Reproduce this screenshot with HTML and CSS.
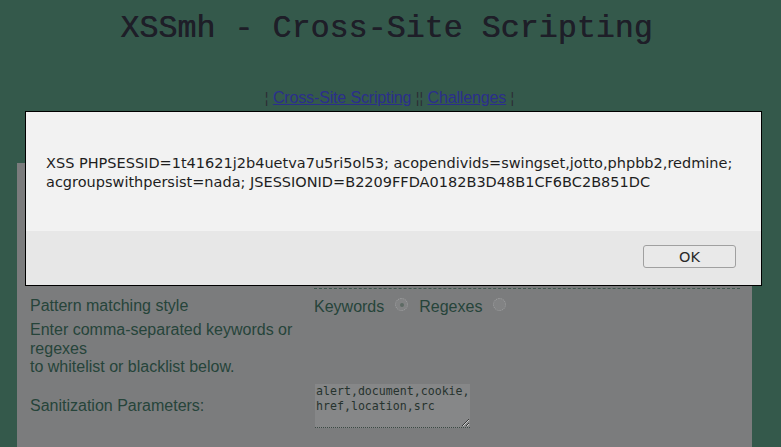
FILE: index.html
```html
<!DOCTYPE html>
<html>
<head>
<meta charset="utf-8">
<title>XSSmh - Cross-Site Scripting</title>
<link rel="stylesheet" href="styles.css">
</head>
<body>
<h1 class="title">XSSmh - Cross-Site Scripting</h1>
<nav class="nav"><span class="sep">¦</span> <a href="#">Cross-Site Scripting</a> <span class="sep">¦¦</span> <a href="#">Challenges</a> <span class="sep">¦</span></nav>
<main class="panel">
  <div class="filler"><div></div><div class="hidden-input"></div></div>
  <div class="row row-radio">
    <div class="label">Pattern matching style</div>
    <div class="value radios">
      <span>Keywords</span><span class="radio checked"></span>
      <span>Regexes</span><span class="radio"></span>
    </div>
  </div>
  <div class="row row-text">
    <div class="label narrow">Enter comma-separated keywords or regexes<br>to whitelist or blacklist below.</div>
    <div class="value"></div>
  </div>
  <div class="row row-area">
    <div class="label">Sanitization Parameters:</div>
    <div class="value"><textarea class="area">alert,document,cookie,
href,location,src</textarea></div>
  </div>
</main>
<div class="dialog">
  <div class="dialog-body">XSS PHPSESSID=1t41621j2b4uetva7u5ri5ol53; acopendivids=swingset,jotto,phpbb2,redmine;<br>acgroupswithpersist=nada; JSESSIONID=B2209FFDA0182B3D48B1CF6BC2B851DC</div>
  <div class="dialog-foot"><button class="ok">OK</button></div>
</div>
</body>
</html>
```
FILE: styles.css
```css
html, body {
  margin: 0;
  padding: 0;
  background: #34594b;
  height: 100%;
  overflow: hidden;
}
body {
  font-family: "Liberation Sans", Arial, sans-serif;
  font-size: 16px;
  position: relative;
}
.title {
  margin: 0;
  padding-top: 11px;
  font-family: "Liberation Mono", "Courier New", monospace;
  font-weight: normal;
  font-size: 31.7px;
  line-height: 36px;
  color: #1e1e28;
  text-align: center;
  padding-right: 8px;
  text-shadow: 0.4px 0 0 #1e1e28;
}
.nav {
  margin-top: 42px;
  text-align: center;
  line-height: 18px;
  color: #3a3a44;
  padding-right: 2px;
}
.nav a {
  color: #2b2e8c;
  letter-spacing: -0.15px;
}
.sep {
  color: #2c2c34;
  font-size: 14px;
}
.panel {
  margin: 56px 0 0 17px;
  width: 735px;
  height: 300px;
  background: #7b7c7d;
  color: #26443a;
  box-sizing: border-box;
  padding: 0 0 0 13px;
}
.row, .filler {
  display: grid;
  grid-template-columns: 284px 1fr;
}
.filler {
  height: 126px;
}
.hidden-input {
  margin-right: 12px;
  border-bottom: 1px dashed #3f5a50;
}
.row-radio {
  margin-top: 7px;
  height: 20px;
  align-items: center;
}
.radios {
  display: flex;
  align-items: center;
  padding-top: 2px;
}
.radio {
  width: 11px;
  height: 11px;
  border-radius: 50%;
  border: 1px dotted #a0a1a2;
  background: #828384;
  margin: 0 11px 0 11px;
  position: relative;
  top: -3px;
  box-sizing: content-box;
}
.radio.checked::after {
  content: "";
  position: absolute;
  left: 4px;
  top: 4px;
  width: 4px;
  height: 4px;
  border-radius: 50%;
  background: #5d6a64;
}
.row-text {
  margin-top: 5px;
}
.narrow {
  width: 275px;
  line-height: 18.5px;
}
.row-area {
  margin-top: 7px;
  align-items: center;
}
.area {
  display: block;
  width: 155px;
  height: 44px;
  box-sizing: border-box;
  margin: 0 0 0 1px;
  padding: 0 0 0 1px;
  border: none;
  border-bottom: 1px dotted #3b4a44;
  background: #868788;
  color: #26332e;
  font-family: "DejaVu Sans Mono", monospace;
  font-size: 11.6px;
  line-height: 15px;
  resize: both;
  overflow: hidden;
}
.dialog {
  position: absolute;
  left: 25px;
  top: 111px;
  width: 737px;
  height: 175px;
  box-sizing: border-box;
  border: 1px solid #000;
  background: #f2f2f2;
  display: flex;
  flex-direction: column;
  font-family: "DejaVu Sans", sans-serif;
  color: #1e1e1e;
}
.dialog-body {
  height: 119px;
  box-sizing: border-box;
  padding: 42px 0 0 20px;
  font-size: 14.5px;
  line-height: 18.5px;
}
.dialog-foot {
  flex: 1;
  background: #e7e7e7;
  display: flex;
  justify-content: flex-end;
  padding: 14px 25px 0 0;
}
.ok {
  width: 93px;
  height: 23px;
  border: 1px solid #a0a0a0;
  border-radius: 3px;
  background: #e9e9e9;
  font-family: "DejaVu Sans", sans-serif;
  font-size: 14.5px;
  color: #2a2a2a;
  padding: 0;
}
```
